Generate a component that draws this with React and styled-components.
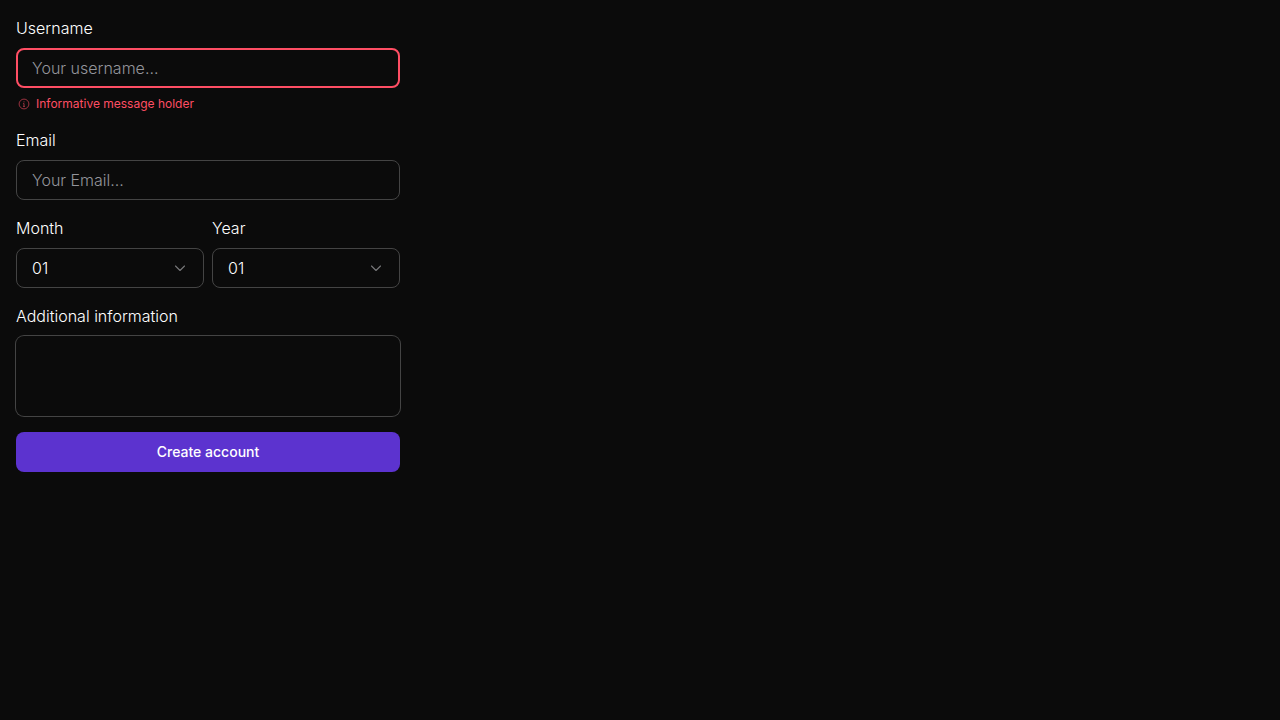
import React from "react";
import styled, { createGlobalStyle } from "styled-components";

const GlobalStyle = createGlobalStyle`
  *, *::before, *::after { box-sizing: border-box; }
  body {
    margin: 0;
    background: #0b0b0b;
    color: #fff;
    font-family: Inter, "Liberation Sans", sans-serif;
    font-size: 16px;
    font-weight: 300;
    line-height: 24px;
  }
  input, select, textarea, button { font: inherit; color: inherit; }
`;

const Form = styled.form`
  display: flex;
  flex-direction: column;
  gap: 16px;
  width: 100%;
  max-width: 416px;
  padding: 16px;
`;

const Field = styled.div`
  display: flex;
  flex-direction: column;
  gap: 8px;
  flex: 1;
  min-width: 0;
`;

const Row = styled.div`
  display: flex;
  gap: 8px;
`;

const Label = styled.label`
  display: block;
`;

const Input = styled.input`
  width: 100%;
  height: 40px;
  padding: 0 ${(p) => (p.$error ? 14 : 15)}px;
  border: ${(p) => (p.$error ? "2px solid #ff4e64" : "1px solid #444")};
  border-radius: 8px;
  background: transparent;
  outline: none;
  &::placeholder { color: #94959b; opacity: 1; }
`;

const Hint = styled.p`
  display: flex;
  align-items: center;
  gap: 4px;
  margin: 0;
  font-size: 12px;
  font-weight: 400;
  line-height: 16px;
  color: #ff4e64;
  & > svg { opacity: 0.65; }
`;

const SelectBox = styled.div`
  display: grid;
  align-items: center;
  & > * { grid-area: 1 / 1; }
  & > svg { justify-self: end; margin-right: 16px; pointer-events: none; }
`;

const Select = styled.select`
  appearance: none;
  width: 100%;
  height: 40px;
  padding: 0 40px 0 15px;
  border: 1px solid #444;
  border-radius: 8px;
  background: transparent;
  outline: none;
`;

const TextArea = styled.textarea`
  display: block;
  height: 80px;
  padding: 8px 16px;
  border: 0;
  border-radius: 8px;
  box-shadow: 0 0 0 1px #444;
  background: transparent;
  outline: none;
  resize: none;
`;

const Button = styled.button`
  height: 40px;
  border: 0;
  border-radius: 8px;
  background: #5c33cf;
  font-size: 14px;
  font-weight: 500;
  line-height: 24px;
  cursor: pointer;
`;

const InfoIcon = () => (
  <svg width="16" height="16" viewBox="0 0 16 16" fill="none" stroke="currentColor" strokeWidth="0.9" aria-hidden="true">
    <circle cx="8" cy="8" r="4.9" />
    <path d="M7.2 7.5H8v2.9M7 10.4h2" />
    <circle cx="8" cy="5.8" r="0.6" fill="currentColor" stroke="none" />
  </svg>
);

const Chevron = () => (
  <svg width="16" height="16" viewBox="0 0 16 16" fill="none" stroke="#77787a" strokeWidth="1.1" strokeLinecap="round" strokeLinejoin="round" aria-hidden="true">
    <path d="M3.5 6 8 10.5 12.5 6" />
  </svg>
);

function Dropdown({ id, label }) {
  return (
    <Field>
      <Label htmlFor={id}>{label}</Label>
      <SelectBox>
        <Select id={id} defaultValue="01">
          <option value="01">01</option>
        </Select>
        <Chevron />
      </SelectBox>
    </Field>
  );
}

export default function App() {
  return (
    <>
      <GlobalStyle />
      <Form onSubmit={(e) => e.preventDefault()}>
        <Field>
          <Label htmlFor="username">Username</Label>
          <Input id="username" type="text" placeholder="Your username..." aria-invalid="true" aria-describedby="username-hint" $error />
          <Hint id="username-hint"><InfoIcon />Informative message holder</Hint>
        </Field>
        <Field>
          <Label htmlFor="email">Email</Label>
          <Input id="email" type="email" placeholder="Your Email..." />
        </Field>
        <Row>
          <Dropdown id="month" label="Month" />
          <Dropdown id="year" label="Year" />
        </Row>
        <Field>
          <Label htmlFor="info">Additional information</Label>
          <TextArea id="info" />
        </Field>
        <Button type="submit">Create account</Button>
      </Form>
    </>
  );
}
